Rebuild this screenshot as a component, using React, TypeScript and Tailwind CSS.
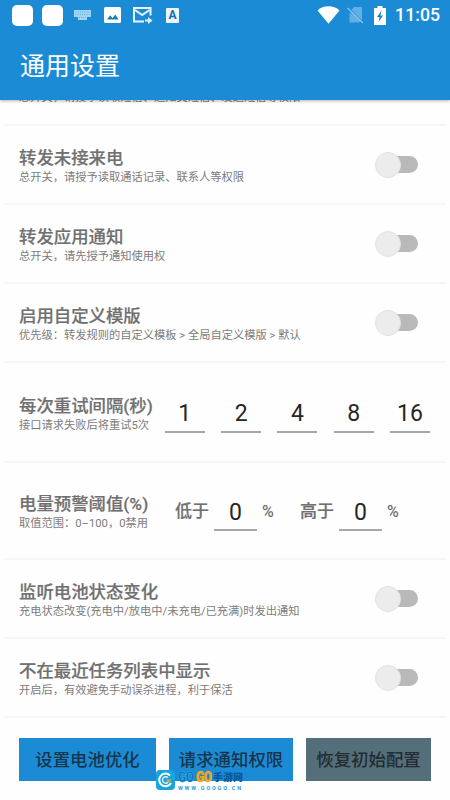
import { useState } from "react";

const FONT =
  "font-['Roboto','Noto_Sans_CJK_SC',sans-serif]";

function StatusBar() {
  return (
    <div className="flex h-[30px] items-center justify-between pr-[10px] pl-3 text-white">
      <div className="flex items-center">
        <span className="h-[21px] w-[21px] rounded-[5px] bg-white" />
        <span className="ml-[9px] h-[21px] w-[21px] rounded-[5px] bg-white" />
        <svg className="ml-[11px] h-[10px] w-[17px]" viewBox="0 0 17 10" fill="#a5d5f5">
          <path d="M0 0h17v7h-4v3H4V7H0z" />
          <path
            d="M1.5 2h14M1.5 4.5h14M5 7.5h7"
            stroke="#4ba5e0"
            strokeWidth="0.9"
            strokeDasharray="1 1.2"
          />
        </svg>
        <svg className="ml-[13px] h-[16px] w-[17px]" viewBox="0 0 17 16">
          <rect width="17" height="16" rx="1.5" fill="#fff" />
          <path d="M3 12.5l3.2-4.2 2.4 2.8 2.7-3.6 3.3 5z" fill="#1c7fae" />
        </svg>
        <svg className="ml-[11px] h-[18px] w-[21px]" viewBox="0 0 21 18" fill="none" stroke="#e4f5ff" strokeWidth="2">
          <path d="M12 15.500H2V2h16.500V9.500" />
          <path d="M3 4l7.200 5L17.500 4" />
          <path d="M13 14.500h4" />
          <path d="M16 11v7l4.500-3.500z" fill="#e4f5ff" stroke="none" />
        </svg>
        <span className="ml-[13px] flex h-[15px] w-[13px] items-center justify-center rounded-[1px] bg-[#eaf7ff] text-[12px] font-bold text-[#1c6fa8]">
          A
        </span>
      </div>

      <div className="flex items-center">
        <svg className="h-[18px] w-[23px]" viewBox="0 0 23 18" fill="#fff">
          <path d="M0.500 4.500C3.500 1.700 7.300 0.300 11.500 0.300s8 1.400 11 4.200L11.500 17.800z" />
        </svg>
        <svg className="ml-[7px] h-[18px] w-[17px]" viewBox="0 0 17 18">
          <path d="M7 1h8v13.500L4.500 4zM2.500 6.500l10 10H2.500z" fill="#62afe5" />
          <path d="M3.500 5.500L14 16H7z" fill="#62afe5" />
          <path d="M0.500 2l15.500 15" stroke="#8cc6ef" strokeWidth="1.200" />
        </svg>
        <svg className="ml-[10px] h-[19px] w-[12px]" viewBox="0 0 12 19">
          <path d="M3.500 0h5v2H12v17H0V2h3.500z" fill="#fff" />
          <path d="M7.500 4.500L3 11h2.600l-1.100 5L9 9.500H6.400z" fill="#1c7fc0" />
        </svg>
        <span className="ml-[9px] pt-px text-[17.700px] leading-none font-medium">
          11:05
        </span>
      </div>
    </div>
  );
}

function Toggle() {
  const [on, setOn] = useState(false);

  return (
    <button
      role="switch"
      aria-checked={on}
      onClick={() => setOn(!on)}
      className="mr-[28px] flex h-[26px] w-[43px] items-center"
    >
      <span className="ml-1 flex h-[17px] w-[39px] items-center rounded-full bg-[#b9b9b9]">
        <span
          className={`h-[26px] w-[26px] shrink-0 rounded-full border border-[#e2e2e2] bg-[#ececec] ${
            on ? "ml-[13px]" : "-ml-1"
          }`}
        />
      </span>
    </button>
  );
}

interface RowProps {
  title: string;
  hint: string;
  className?: string;
  children?: React.ReactNode;
}

function Row({ title, hint, className = "h-[79px]", children }: RowProps) {
  return (
    <div
      className={`mx-1 flex shrink-0 items-center justify-between border-b-2 border-[#f7f7f7] pl-[15px] ${className}`}
    >
      <div className="pt-[5px] whitespace-nowrap">
        <h3 className="text-[17.400px] leading-[21px] font-medium text-[#707070] [-webkit-text-stroke:0.2px_#707070]">
          {title}
        </h3>
        <p className="text-[11.250px] leading-[17px] text-[#7c7c7c]">{hint}</p>
      </div>
      {children}
    </div>
  );
}

function NumberField({ value, className }: { value: string; className: string }) {
  return (
    <input
      defaultValue={value}
      className={`mt-[4px] h-[37px] border-b-2 border-[#a8a8a8] bg-transparent pt-px text-center text-[23px] font-normal text-[#262626] outline-none ${className}`}
    />
  );
}

function Watermark() {
  return (
    <div className="absolute top-[770px] left-[156px] flex items-start">
      <svg className="h-[20px] w-[19px]" viewBox="0 0 19 20" fill="none">
        <rect width="19" height="20" rx="4" fill="#18a5dd" />
        <path d="M14 5.500A6.300 6.300 0 1 0 15 13" stroke="#fff" strokeWidth="2" />
        <path d="M12 7.800A3.200 3.200 0 1 0 12 12.200" stroke="#d7f2ff" strokeWidth="1.400" />
        <path d="M9.500 9.500h6l-2.500 3.500z" fill="#f7a325" />
      </svg>
      <div className="ml-[3px]">
        <div className="flex h-[15px] items-center leading-none font-black">
          <span className="w-[17px] origin-left scale-x-80 text-[15px] leading-[15px] tracking-[-0.500px] text-[#0872b5] [-webkit-text-stroke:0.500px_#45bdf0]">
            GO
          </span>
          <span className="ml-px w-[17px] origin-left scale-x-80 text-[15px] leading-[15px] tracking-[-0.500px] text-[#f9a51a] [-webkit-text-stroke:0.500px_#f9a51a]">
            GO
          </span>
          <span className="text-[10px] text-[#075a96]">手游网</span>
        </div>
        <div className="mt-px text-[5.500px] leading-[5px] font-bold tracking-[1.800px] text-[#2b9bd8]">
          WWW.GOOGO.CN
        </div>
      </div>
    </div>
  );
}

export default function App() {
  return (
    <div
      className={`relative flex h-[800px] w-[450px] flex-col overflow-hidden bg-[#fefefe] ${FONT}`}
    >
      <header className="z-10 h-[100px] shrink-0 bg-[#1c8bd6] shadow-[0_1px_3px_rgba(0,0,0,0.3)]">
        <StatusBar />
        <h1 className="pt-[18px] pl-5 text-[25px] leading-[38px] text-white">
          通用设置
        </h1>
      </header>

      {/* first row is mostly scrolled under the header */}
      <div className="mx-1 -mt-[11px] h-[37px] shrink-0 border-b-2 border-[#f7f7f7] pl-[15px] text-[11.250px] leading-[18px] whitespace-nowrap text-[#7c7c7c]">
        总开关，请授予读取短信、通知类短信、发送短信等权限
      </div>

      <main className="flex flex-col">
        <Row title="转发未接来电" hint="总开关，请授予读取通话记录、联系人等权限">
          <Toggle />
        </Row>
        <Row title="转发应用通知" hint="总开关，请先授予通知使用权">
          <Toggle />
        </Row>
        <Row
          title="启用自定义模版"
          hint="优先级：转发规则的自定义模板 > 全局自定义模版 > 默认"
        >
          <Toggle />
        </Row>
        <Row
          title="每次重试间隔(秒)"
          hint="接口请求失败后将重试5次"
          className="h-[100px]"
        >
          <div className="flex gap-[16.300px] pr-4">
            {["1", "2", "4", "8", "16"].map((value) => (
              <NumberField key={value} value={value} className="w-[40px]" />
            ))}
          </div>
        </Row>
        <Row
          title="电量预警阈值(%)"
          hint="取值范围：0–100，0禁用"
          className="h-[97px]"
        >
          <div className="flex items-center pr-[46px] text-[17px] font-medium text-[#707070]">
            <span className="pt-[3px] [-webkit-text-stroke:0.2px_#707070]">低于</span>
            <NumberField value="0" className="ml-[5px] w-[43px]" />
            <span className="ml-[5px] w-[13px] pt-[3px] text-[16px]">%</span>
            <span className="ml-[25px] pt-[3px] [-webkit-text-stroke:0.2px_#707070]">高于</span>
            <NumberField value="0" className="ml-[5px] w-[43px]" />
            <span className="ml-[5px] w-[13px] pt-[3px] text-[16px]">%</span>
          </div>
        </Row>
        <Row
          title="监听电池状态变化"
          hint="充电状态改变(充电中/放电中/未充电/已充满)时发出通知"
        >
          <Toggle />
        </Row>
        <Row
          title="不在最近任务列表中显示"
          hint="开启后，有效避免手动误杀进程，利于保活"
        >
          <Toggle />
        </Row>
      </main>

      <footer className="mt-5 flex gap-[13px] pl-[19px] text-[17.400px] font-medium text-[#17354b]">
        <button className="h-[43px] w-[137px] bg-[#1c8bd6] pt-[2px]">
          设置电池优化
        </button>
        <button className="h-[43px] w-[124px] bg-[#1c8bd6] pt-[2px]">
          请求通知权限
        </button>
        <button className="h-[43px] w-[125px] bg-[#546e7a] pt-[2px] text-[#222c31]">
          恢复初始配置
        </button>
      </footer>

      <Watermark />
    </div>
  );
}
